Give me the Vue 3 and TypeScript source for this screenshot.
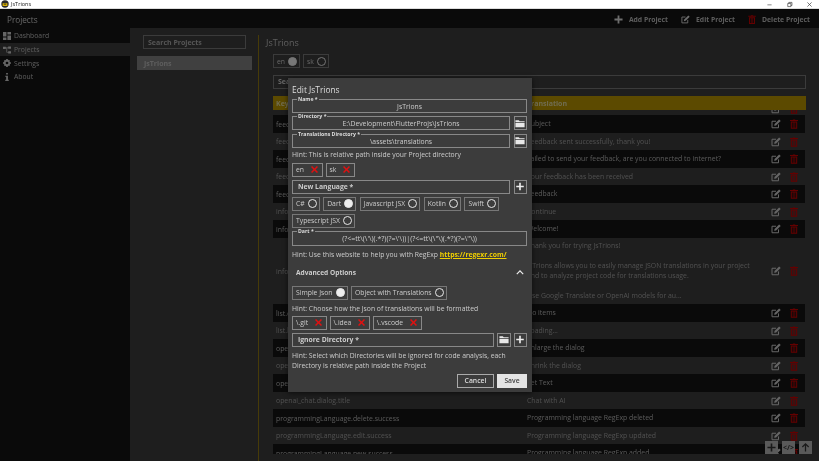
<script setup lang="ts">
const nav = [
  { label: 'Dashboard', icon: 'dash', active: false },
  { label: 'Projects', icon: 'tree', active: true },
  { label: 'Settings', icon: 'gear', active: false },
  { label: 'About', icon: 'info', active: false },
]
const rows: { k: string; t: string[] }[] = [
  { k: 'feedback.email.subject', t: ['Subject'] },
  { k: 'feedback.send.success', t: ['Feedback sent successfully, thank you!'] },
  { k: 'feedback.send.error', t: ['Failed to send your feedback, are you connected to internet?'] },
  { k: 'feedback.received', t: ['Your feedback has been received'] },
  { k: 'feedback.title', t: ['Feedback'] },
  { k: 'info.continue', t: ['Continue'] },
  { k: 'info.welcome', t: ['Welcome!'] },
  {
    k: 'info.description',
    t: [
      'Thank you for trying JsTrions!',
      'JsTrions allows you to easily manage JSON translations in your project and to analyze project code for translations usage.',
      'Use Google Translate or OpenAI models for au...',
    ],
  },
  { k: 'list.empty', t: ['No items'] },
  { k: 'list.loading', t: ['Loading...'] },
  { k: 'openai_chat.dialog.enlarge', t: ['Enlarge the dialog'] },
  { k: 'openai_chat.dialog.shrink', t: ['Shrink the dialog'] },
  { k: 'openai_chat.dialog.set', t: ['Set Text'] },
  { k: 'openai_chat.dialog.title', t: ['Chat with AI'] },
  { k: 'programmingLanguage.delete.success', t: ['Programming language RegExp deleted'] },
  { k: 'programmingLanguage.edit.success', t: ['Programming language RegExp updated'] },
  { k: 'programmingLanguage.new.success', t: ['Programming language RegExp added'] },
]
const langs = ['en', 'sk']
const radios = [
  { l: 'C#', on: false },
  { l: 'Dart', on: true },
  { l: 'Javascript JSX', on: false },
  { l: 'Kotlin', on: false },
  { l: 'Swift', on: false },
  { l: 'Typescript JSX', on: false },
]
const ignores = ['\\.git', '\\.idea', '\\.vscode']
const regex = `(?<=tt\\(\\'\\)(.*?)(?=\\'\\))|(?<=tt\\(\\"\\)(.*?)(?=\\"\\))`
</script>

<template>
  <div class="win">
    <header class="titlebar">
      <svg class="logo" viewBox="0 0 10 10"><circle cx="5" cy="5" r="4.6" fill="#2a2a2a" /><path d="M2 4h6v3.5H2z" fill="#d8b000" /><path d="M3.5 5.2h3" stroke="#222" /></svg>
      <span class="ttl">JsTrions</span>
      <span class="spacer"></span>
      <svg class="wc" viewBox="0 0 10 10"><path d="M2 5.5h6" stroke="#555" /></svg>
      <svg class="wc" viewBox="0 0 10 10"><path d="M2.5 3.5h4.500v4.500h-4.500zM4 3.500v-1.500h4.500v4.500h-1.500" fill="none" stroke="#444" /></svg>
      <svg class="wc" viewBox="0 0 10 10"><path d="M2 2l6 6M8 2l-6 6" stroke="#444" /></svg>
    </header>

    <div class="app">
      <div class="appbar">
        <span class="apptitle">Projects</span>
        <span class="spacer"></span>
        <button class="act act-add">
          <svg viewBox="0 0 10 10"><path d="M5 .5v9M.5 5h9" stroke="#ddd" stroke-width="2" /></svg>Add Project
        </button>
        <button class="act act-edit">
          <svg viewBox="0 0 12 12"><use href="#ic-edit" /></svg>Edit Project
        </button>
        <button class="act act-del">
          <svg class="red" viewBox="0 0 10 12"><use href="#ic-trash" /></svg>Delete Project
        </button>
      </div>
      <div class="body">
        <nav class="side">
          <a v-for="n in nav" :key="n.label" class="navitem" :class="{ active: n.active }">
            <svg viewBox="0 0 10 10">
              <path v-if="n.icon === 'dash'" d="M0 0h4.300v5.500H0zM5.500 0H10v3.200H5.500zM5.500 4.500H10V10H5.500zM0 6.800h4.300V10H0z" fill="#ccc" />
              <path v-else-if="n.icon === 'tree'" d="M0 1h3.500v2.800H0zM6.500 .5H10v2.800H6.500zM6.500 6.500H10v2.800H6.500zM3.500 2h3v.8h-3zM4.300 2.400h.9v5h1.300v.8H4.300z" fill="#ccc" />
              <path v-else-if="n.icon === 'gear'" fill-rule="evenodd" d="M4 0h2l.3 1.500 1-.5L8.800 2.300l-.8 1L9.500 3.800 10 6l-1.600.3.500 1.200L7.500 9l-1.200-.8L6 10H4l-.3-1.700-1.200.8L1 7.500l.8-1.200L0 6V4l1.700-.3L1 2.500 2.500 1l1.200.7zM5 3.300a1.700 1.700 0 100 3.400 1.700 1.700 0 000-3.400z" fill="#ccc" />
              <path v-else d="M3.900 0h2.200v2H3.900zM3 3.500h3.200V8.500H7.200V10H2.800V8.500H3.900V5H3z" fill="#ccc" />
            </svg>
            <span>{{ n.label }}</span>
          </a>
        </nav>
        <main class="main">
          <section class="projects">
            <div class="psearch">Search Projects</div>
            <div class="pitem">JsTrions</div>
          </section>
          <section class="detail">
            <h2 class="dtitle">JsTrions</h2>
            <div class="dchips">
              <span class="chip">en <i class="radio on"></i></span>
              <span class="chip">sk <i class="radio"></i></span>
            </div>
            <div class="tsearch">Search</div>
            <div class="thead"><span class="kcol">Key</span><span>Translation</span></div>
            <div class="tbody">
              <div class="row ghost">
                <span class="acts"><svg class="ed" viewBox="0 0 12 12"><use href="#ic-edit" /></svg><svg class="tr" viewBox="0 0 10 12"><use href="#ic-trash" /></svg></span>
              </div>
              <div v-for="r in rows" :key="r.k" class="row" :class="{ tall: r.t.length > 1 }">
                <span class="kcol">{{ r.k }}</span>
                <div class="tcol"><p v-for="(t, i) in r.t" :key="i">{{ t }}</p></div>
                <span class="acts"><svg class="ed" viewBox="0 0 12 12"><use href="#ic-edit" /></svg><svg class="tr" viewBox="0 0 10 12"><use href="#ic-trash" /></svg></span>
              </div>
            </div>
          </section>
        </main>
      </div>

      <div class="fabs">
        <button class="fab"><svg viewBox="0 0 10 10"><path d="M5 .5v9M.5 5h9" stroke="#333" stroke-width="1.800" /></svg></button>
        <button class="fab code">&lt;/&gt;</button>
        <button class="fab"><svg viewBox="0 0 10 10"><path d="M5 9.500V1M1.500 4.500L5 1l3.500 3.500" fill="none" stroke="#333" stroke-width="1.400" /></svg></button>
      </div>

      <div class="barrier">
        <div class="dialog">
          <h3>Edit JsTrions</h3>
          <fieldset class="fld f-name"><legend>Name *</legend><div>JsTrions</div></fieldset>
          <div class="fline f-dir">
            <fieldset class="fld grow"><legend>Directory *</legend><div>E:\Development\FlutterProjs\JsTrions</div></fieldset>
            <button class="sq"><svg viewBox="0 0 12 10"><use href="#ic-folder" /></svg></button>
          </div>
          <div class="fline f-tr">
            <fieldset class="fld grow"><legend>Translations Directory *</legend><div>\assets\translations</div></fieldset>
            <button class="sq"><svg viewBox="0 0 12 10"><use href="#ic-folder" /></svg></button>
          </div>
          <p class="hint h1">Hint: This is relative path inside your Project directory</p>
          <div class="chips c1">
            <span v-for="l in langs" :key="l" class="xchip">{{ l }}<svg viewBox="0 0 8 8"><use href="#ic-x" /></svg></span>
          </div>
          <div class="fline nl">
            <div class="plain grow">New Language *</div>
            <button class="sq"><svg viewBox="0 0 10 10"><path d="M5 .8v8.400M.8 5h8.400" stroke="#eee" stroke-width="1.800" /></svg></button>
          </div>
          <div class="radios">
            <span v-for="r in radios" :key="r.l" class="chip">{{ r.l }} <i class="radio" :class="{ on: r.on }"></i></span>
          </div>
          <fieldset class="fld rx"><legend>Dart *</legend><div>{{ regex }}</div></fieldset>
          <p class="hint h2">Hint: Use this website to help you with RegExp <a>https://regexr.com/</a></p>
          <div class="adv">
            <b>Advanced Options</b>
            <svg viewBox="0 0 10 6"><path d="M1 5l4-4 4 4" fill="none" stroke="#eee" stroke-width="1.500" /></svg>
          </div>
          <div class="radios json">
            <span class="chip">Simple Json <i class="radio on"></i></span>
            <span class="chip">Object with Translations <i class="radio"></i></span>
          </div>
          <p class="hint h3">Hint: Choose how the Json of translations will be formatted</p>
          <div class="chips c2">
            <span v-for="g in ignores" :key="g" class="xchip">{{ g }}<svg viewBox="0 0 8 8"><use href="#ic-x" /></svg></span>
          </div>
          <div class="fline ig">
            <div class="plain grow">Ignore Directory *</div>
            <button class="sq"><svg viewBox="0 0 12 10"><use href="#ic-folder" /></svg></button>
            <button class="sq"><svg viewBox="0 0 10 10"><path d="M5 .8v8.400M.8 5h8.400" stroke="#eee" stroke-width="1.800" /></svg></button>
          </div>
          <p class="hint h4">Hint: Select which Directories will be ignored for code analysis, each Directory is relative path inside the Project</p>
          <div class="dacts">
            <button class="btn">Cancel</button>
            <button class="btn save">Save</button>
          </div>
        </div>
      </div>
    </div>

    <svg class="defs" width="0" height="0">
      <defs>
        <g id="ic-edit">
          <path d="M9 6.500V10.500H1.200V2.700H6" fill="none" stroke="currentColor" stroke-width="1.200" />
          <path d="M3.800 8.200l.5-2.300L9.800.5l1.800 1.800-5.500 5.400z" fill="currentColor" />
        </g>
        <g id="ic-trash">
          <path d="M3.500 1V.3h3V1H10v1.300H0V1zM1 3h8v9H1zM2.300 4.200v6.600h1.200V4.200zM4.400 4.200v6.600h1.200V4.200zM6.500 4.200v6.600h1.200V4.200z" fill="currentColor" fill-rule="evenodd" />
        </g>
        <path id="ic-folder" d="M.5 1h4l1.200 1.300h5.800v1H.5zM.5 4h11v5.500H.5z" fill="#e8e8e8" />
        <path id="ic-x" d="M1.200 0L4 2.800 6.800 0 8 1.200 5.200 4 8 6.800 6.800 8 4 5.200 1.200 8 0 6.800 2.800 4 0 1.200z" fill="#e01010" />
      </defs>
    </svg>
  </div>
</template>

<style scoped>
* { box-sizing: border-box; }
.win {
  width: 819px; height: 461px; overflow: hidden; display: flex; flex-direction: column;
  font-family: "Open Sans", "Noto Sans", sans-serif; font-size: 6.800px; color: #ccc; background: #3c3c3c;
  filter: blur(.3px);
}
.titlebar { height: 9px; background: #fff; display: flex; align-items: center; color: #222; flex: none; border-bottom: 1px solid #ddd; }
.logo { width: 8px; height: 8px; margin-left: 1px; }
.ttl { font-size: 5.500px; margin-left: 2px; }
.spacer { flex: 1; }
.wc { width: 7px; height: 7px; margin-right: 13px; }
.wc:last-of-type { margin-right: 6px; }
.app { position: relative; flex: 1; display: flex; flex-direction: column; min-height: 0; }
.appbar { height: 19px; flex: none; background: #141414; display: flex; align-items: center; padding: 1px 9px 0 0; }
.apptitle { font-size: 8.200px; margin-left: 7px; color: #ccc; }
.act { display: flex; align-items: center; background: none; border: 0; padding: 0; color: #bbb; font: 700 6.800px "Open Sans", sans-serif; white-space: nowrap; }
.act svg { width: 9px; height: 9px; margin-right: 6px; color: #ddd; }
.act-edit, .act-del { margin-left: 13px; }
.act svg.red { color: #c80000; width: 8px; }
.body { flex: 1; display: flex; min-height: 0; }
.side { width: 130px; flex: none; background: #141414; padding-top: 1px; }
.navitem { height: 13.700px; display: flex; align-items: center; padding-left: 3px; color: #bbb; font-size: 6.800px; }
.navitem svg { width: 8px; height: 8px; margin-right: 3px; }
.navitem.active { background: #3c3c3c; }
.main { flex: 1; display: flex; min-width: 0; }
.projects { width: 129px; flex: none; border-right: 1px solid #8f7710; margin-top: 7px; padding: 0 6px 0 7px; }
.psearch { margin: 0 6px; height: 14px; border: 1px solid #777; font-weight: 700; font-size: 7px; line-height: 13px; padding-left: 4px; color: #aaa; }
.pitem { margin-top: 6.500px; height: 14px; background: #808080; line-height: 15px; padding-left: 7px; font-weight: 700; font-size: 7px; color: #bbb; }
.detail { flex: 1; min-width: 0; padding-left: 7px; display: flex; flex-direction: column; }
.dtitle { margin: 7px 0 0; font-size: 9px; line-height: 15px; font-weight: 400; color: #bbb; height: 14px; }
.dchips { display: flex; gap: 3px; margin: 5px 0 0 7px; height: 14px; }
.chip { display: inline-flex; align-items: center; height: 14px; border: 1px solid #777; padding: 0 2px 0 3px; font-size: 6.800px; white-space: nowrap; gap: 3px; }
.radio { width: 9px; height: 9px; border-radius: 50%; border: 1px solid #e8e8e8; display: inline-block; flex: none; }
.radio.on { background: #eee; }
.tsearch { margin: 7px 13px 0 7px; height: 14px; border: 1px solid #777; font-weight: 700; font-size: 7px; line-height: 12px; padding-left: 4px; }
.thead { margin: 7px 13px 0 7px; height: 14px; background: #b89500; display: flex; align-items: center; padding-left: 3px; font-weight: 700; font-size: 7px; color: #e0d8a0; flex: none; }
.kcol { width: 251px; flex: none; white-space: nowrap; }
.tbody { margin: 0 14px 0 7px; height: 344px; overflow: hidden; }
.row { min-height: 17.500px; display: flex; align-items: center; padding: 1px 0 0 3px; font-size: 6.900px; color: #a0a0a0; position: relative; }
.row:nth-child(even) { background: #141414; color: #b4b4b4; }
.row.ghost { min-height: 5px; height: 5px; overflow: visible; }
.row.ghost .acts { top: -6px; }
.tcol { flex: 1; padding-right: 42px; min-width: 0; }
.tcol p { margin: 0; line-height: 10px; }
.tall { min-height: 66.500px; }
.tall .tcol p + p { margin-top: 10px; }
.acts { position: absolute; right: 7px; top: 4px; display: flex; gap: 9px; align-items: center; }
.tall .acts { top: 28px; }
.ed { width: 10px; height: 10px; color: #ccc; }
.tr { width: 8px; height: 10px; color: #c80000; }
.fabs { position: absolute; right: 7px; bottom: 7px; display: flex; gap: 4px; z-index: 1; }
.fab { width: 13px; height: 13px; border: 0; padding: 0; background: #b4b4b4; color: #333; font: 700 7px "Open Sans", sans-serif; display: flex; align-items: center; justify-content: center; white-space: nowrap; }
.fab svg { width: 9px; height: 9px; }
.barrier { position: absolute; inset: 0; background: rgba(0, 0, 0, .5); z-index: 2; }
.dialog { position: absolute; left: 288px; top: 69px; width: 244px; height: 314px; background: #3c3c3c; padding: 6px 5px 0 4px; box-shadow: 0 1px 5px rgba(0, 0, 0, .6); display: flex; flex-direction: column; }
h3 { margin: 0; font-size: 8.400px; line-height: 12px; font-weight: 400; color: #ddd; height: 12px; flex: none; }
.fld { margin: 0; padding: 0; border: 1px solid #888; min-width: 0; height: 16px; text-align: center; color: #ccc; font-size: 6.800px; line-height: 12px; flex: none; }
.fld legend { margin-left: 4px; padding: 0 1px; font-size: 5.200px; font-weight: 700; text-align: left; line-height: 5px; color: #ddd; }
.fld > div { margin-top: -1px; white-space: nowrap; }
.f-name { margin-top: 1px; }
.fline { display: flex; gap: 3.500px; align-items: flex-end; flex: none; }
.f-dir { margin-top: 1px; }
.f-tr { margin-top: 1.500px; }
.grow { flex: 1; min-width: 0; }
.sq { width: 13.500px; height: 14px; flex: none; padding: 0; background: none; border: 1px solid #888; display: flex; align-items: center; justify-content: center; }
.sq svg { width: 10px; height: 9px; }
.hint { margin: 0; font-size: 6.800px; line-height: 10px; color: #ccc; flex: none; }
.h1 { margin-top: 2px; }
.chips { display: flex; gap: 2.500px; flex: none; }
.c1 { margin-top: 3px; }
.xchip { height: 14px; border: 1px solid #888; display: inline-flex; align-items: center; padding: 0 4px 0 3px; gap: 7px; font-size: 6.800px; }
.xchip svg { width: 7px; height: 7px; }
.nl { margin-top: 3px; }
.ig { margin-top: 3px; gap: 3px; }
.plain { height: 14px; border: 1px solid #888; font-weight: 700; font-size: 6.800px; line-height: 12px; padding-left: 5px; }
.radios { display: flex; flex-wrap: wrap; gap: 3px 3.500px; margin-top: 3px; flex: none; }
.rx { margin-top: 1px; height: 17px; }
.rx > div { font-size: 7px; }
.h2 { margin-top: 4px; }
.h2 a { color: #f0d000; font-weight: 700; text-decoration: underline; }
.adv { display: flex; align-items: center; justify-content: space-between; padding: 0 3px 0 4px; height: 13px; margin-top: 6.500px; flex: none; }
.adv b { font-size: 6.600px; }
.adv svg { width: 8px; height: 5px; }
.json { margin-top: 6.500px; }
.h3 { margin-top: 4px; }
.c2 { margin-top: 2px; }
.h4 { margin-top: 4px; }
.dacts { display: flex; justify-content: flex-end; gap: 3px; margin-top: 3px; flex: none; }
.btn { height: 14px; width: 37px; background: none; border: 1px solid #aaa; color: #ddd; font: 600 6.800px "Open Sans", sans-serif; padding: 0; }
.btn.save { width: 30px; background: #e4e4e4; color: #444; border-color: #e4e4e4; }
.defs { position: absolute; }
</style>
